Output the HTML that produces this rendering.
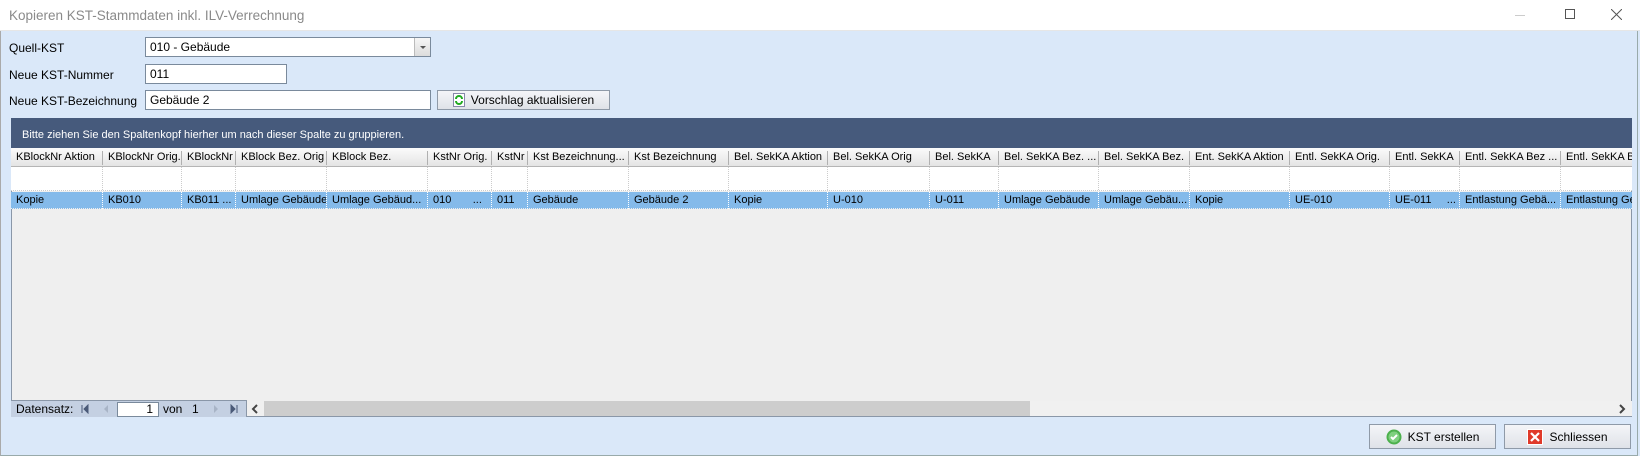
<!DOCTYPE html>
<html><head><meta charset="utf-8"><style>
*{box-sizing:border-box;margin:0;padding:0}
body{width:1640px;height:456px;overflow:hidden;background:#dae8f9;font-family:"Liberation Sans",sans-serif;font-size:12px;color:#000;position:relative}
.a{position:absolute}
.title{left:0;top:0;width:1640px;height:31px;background:#fff;border-bottom:1px solid #e6e6e6}
.title span{position:absolute;left:9px;top:8px;font-size:13.5px;color:#8a8a8a}
.win{border-right:1px solid #9aa;border-bottom:1px solid #9aa;left:0;top:0;width:1638px;height:456px;border-left:1px solid #aaa}
.in{background:#fff;border:1px solid #7a8a9c;height:20px;padding:2px 4px;font-size:12px}
.lbl{font-size:12px}
.btn{border:1px solid #8f9aa8;background:linear-gradient(#f4f5f8,#dfe2e8);font-size:12px;display:flex;align-items:center;justify-content:center;gap:6px}
.hdr{top:148px;height:19px;left:11px;width:1621px;background:linear-gradient(#fbfbfb,#e4e4e4);border-bottom:1px solid #b5b5b5}
.c{position:absolute;font-size:11px;white-space:nowrap;overflow:hidden;padding-left:5px}
.hc{top:3px;height:14px;border-right:1px solid #b0b0b0}
.filt{top:167px;height:24px;left:11px;width:1621px;background:#fff;border-bottom:1px dotted #ccc}
.sel{top:192px;height:17px;left:11px;width:1621px;background:#84baea;border-bottom:1px dotted #eee}
.dc{top:0;height:17px;line-height:17px;border-right:1px dotted #fff}
.fc{top:0;height:23px;border-right:1px dotted #ccc}
</style></head><body>
<div class="a win"></div>
<div class="a title"><span>Kopieren KST-Stammdaten inkl. ILV-Verrechnung</span>
<div class="a" style="left:1515px;top:15px;width:10px;height:1px;background:#ccc"></div>
<div class="a" style="left:1565px;top:9px;width:10px;height:10px;border:1px solid #555"></div>
<svg class="a" style="left:1611px;top:9px" width="11" height="11"><path d="M0 0L11 11M11 0L0 11" stroke="#555" stroke-width="1"/></svg>
</div>
<div class="a lbl" style="left:9px;top:41px">Quell-KST</div>
<div class="a in" style="left:145px;top:37px;width:286px">010 - Gebäude</div>
<div class="a" style="left:414px;top:38px;width:16px;height:18px;background:linear-gradient(#f6f6f6,#dcdcdc);border-left:1px solid #bbb"><svg width="16" height="18"><path d="M5 8h6l-3 3z" fill="#555"/></svg></div>
<div class="a lbl" style="left:9px;top:68px">Neue KST-Nummer</div>
<div class="a in" style="left:145px;top:64px;width:142px">011</div>
<div class="a lbl" style="left:9px;top:94px">Neue KST-Bezeichnung</div>
<div class="a in" style="left:145px;top:90px;width:286px">Gebäude 2</div>
<div class="a btn" style="left:437px;top:90px;width:173px;height:20px"><svg width="12" height="14"><rect x="0.5" y="0.5" width="11" height="13" fill="#fff" stroke="#88a"/><path d="M3 6a3 3 0 0 1 6 0M9 8a3 3 0 0 1-6 0" stroke="#2a2" stroke-width="2" fill="none"/></svg>Vorschlag aktualisieren</div>

<div class="a" style="left:11px;top:118px;width:1621px;height:299px;background:#efefef;border:1px solid #8a97a8"></div>
<div class="a" style="left:11px;top:118px;width:1621px;height:30px;background:#465a7c;color:#fff;font-size:11px;padding:11px 0 0 11px">Bitte ziehen Sie den Spaltenkopf hierher um nach dieser Spalte zu gruppieren.</div>
<div class="a hdr">
<div class="c hc" style="left:0;width:92px">KBlockNr Aktion</div>
<div class="c hc" style="left:92px;width:79px">KBlockNr Orig.</div>
<div class="c hc" style="left:171px;width:54px">KBlockNr</div>
<div class="c hc" style="left:225px;width:91px">KBlock Bez. Orig</div>
<div class="c hc" style="left:316px;width:101px">KBlock Bez.</div>
<div class="c hc" style="left:417px;width:64px">KstNr Orig.</div>
<div class="c hc" style="left:481px;width:36px">KstNr</div>
<div class="c hc" style="left:517px;width:101px">Kst Bezeichnung...</div>
<div class="c hc" style="left:618px;width:100px">Kst Bezeichnung</div>
<div class="c hc" style="left:718px;width:99px">Bel. SekKA Aktion</div>
<div class="c hc" style="left:817px;width:102px">Bel. SekKA Orig</div>
<div class="c hc" style="left:919px;width:69px">Bel. SekKA</div>
<div class="c hc" style="left:988px;width:100px">Bel. SekKA Bez. ...</div>
<div class="c hc" style="left:1088px;width:91px">Bel. SekKA Bez.</div>
<div class="c hc" style="left:1179px;width:100px">Ent. SekKA Aktion</div>
<div class="c hc" style="left:1279px;width:100px">Entl. SekKA Orig.</div>
<div class="c hc" style="left:1379px;width:70px">Entl. SekKA</div>
<div class="c hc" style="left:1449px;width:101px">Entl. SekKA Bez ...</div>
<div class="c hc" style="left:1550px;width:71px;border:none">Entl. SekKA Bez.</div>
</div>
<div class="a filt">
<div class="c fc" style="left:0;width:92px"></div><div class="c fc" style="left:92px;width:79px"></div><div class="c fc" style="left:171px;width:54px"></div><div class="c fc" style="left:225px;width:91px"></div><div class="c fc" style="left:316px;width:101px"></div><div class="c fc" style="left:417px;width:64px"></div><div class="c fc" style="left:481px;width:36px"></div><div class="c fc" style="left:517px;width:101px"></div><div class="c fc" style="left:618px;width:100px"></div><div class="c fc" style="left:718px;width:99px"></div><div class="c fc" style="left:817px;width:102px"></div><div class="c fc" style="left:919px;width:69px"></div><div class="c fc" style="left:988px;width:100px"></div><div class="c fc" style="left:1088px;width:91px"></div><div class="c fc" style="left:1179px;width:100px"></div><div class="c fc" style="left:1279px;width:100px"></div><div class="c fc" style="left:1379px;width:70px"></div><div class="c fc" style="left:1449px;width:101px"></div>
</div>
<div class="a sel">
<div class="c dc" style="left:0;width:92px">Kopie</div>
<div class="c dc" style="left:92px;width:79px">KB010</div>
<div class="c dc" style="left:171px;width:54px">KB011 ...</div>
<div class="c dc" style="left:225px;width:91px">Umlage Gebäude</div>
<div class="c dc" style="left:316px;width:101px">Umlage Gebäud...</div>
<div class="c dc" style="left:417px;width:64px">010 &nbsp; &nbsp; &nbsp; ...</div>
<div class="c dc" style="left:481px;width:36px">011</div>
<div class="c dc" style="left:517px;width:101px">Gebäude</div>
<div class="c dc" style="left:618px;width:100px">Gebäude 2</div>
<div class="c dc" style="left:718px;width:99px">Kopie</div>
<div class="c dc" style="left:817px;width:102px">U-010</div>
<div class="c dc" style="left:919px;width:69px">U-011</div>
<div class="c dc" style="left:988px;width:100px">Umlage Gebäude</div>
<div class="c dc" style="left:1088px;width:91px">Umlage Gebäu...</div>
<div class="c dc" style="left:1179px;width:100px">Kopie</div>
<div class="c dc" style="left:1279px;width:100px">UE-010</div>
<div class="c dc" style="left:1379px;width:70px">UE-011 &nbsp; &nbsp; ...</div>
<div class="c dc" style="left:1449px;width:101px">Entlastung Gebä...</div>
<div class="c dc" style="left:1550px;width:71px;border:none">Entlastung Ge</div>
</div>
<!-- footer -->
<div class="a" style="left:11px;top:400px;width:236px;height:17px;background:#c4d0e2;border-top:1px solid #8a97a8;border-right:1px solid #8a97a8"></div>
<div class="a" style="left:16px;top:402px;font-size:12px">Datensatz:</div>
<svg class="a" style="left:80px;top:404px" width="160" height="10"><path d="M2 1v8M8 1L4 5l4 4z" stroke="#4a5a78" fill="#4a5a78"/><path d="M28 1l-4 4 4 4z" fill="#a8b4c6"/><path d="M134 1l4 4-4 4z" fill="#a8b4c6"/><path d="M151 1l4 4-4 4zM157 1v8" stroke="#4a5a78" fill="#4a5a78"/></svg>
<div class="a" style="left:117px;top:402px;width:42px;height:15px;background:#fff;border:1px solid #7a8a9c;text-align:right;padding-right:5px;font-size:12px;line-height:13px">1</div>
<div class="a" style="left:163px;top:402px;font-size:12px">von</div>
<div class="a" style="left:192px;top:402px;font-size:12px">1</div>
<div class="a" style="left:247px;top:401px;width:1385px;height:16px;background:#f0f0f0;border-bottom:1px solid #8a97a8"></div>
<div class="a" style="left:264px;top:401px;width:766px;height:15px;background:#cdcdcd"></div>
<svg class="a" style="left:250px;top:404px" width="10" height="10"><path d="M7 1L3 5l4 4" stroke="#444" stroke-width="2" fill="none"/></svg>
<svg class="a" style="left:1617px;top:404px" width="10" height="10"><path d="M3 1l4 4-4 4" stroke="#444" stroke-width="2" fill="none"/></svg>
<div class="a btn" style="left:1369px;top:424px;width:127px;height:25px"><svg width="16" height="16"><circle cx="8" cy="8" r="7.5" fill="#4cb04c"/><circle cx="8" cy="8" r="5.5" fill="#7fd07f"/><path d="M5 8l2 2 4-4" stroke="#fff" stroke-width="2" fill="none"/></svg>KST erstellen</div>
<div class="a btn" style="left:1504px;top:424px;width:127px;height:25px"><svg width="16" height="16"><rect width="16" height="16" fill="#fff"/><rect x="1" y="1" width="14" height="14" fill="#e03a2a"/><path d="M4 4l8 8M12 4l-8 8" stroke="#fff" stroke-width="2.2"/></svg>Schliessen</div>
</body></html>
